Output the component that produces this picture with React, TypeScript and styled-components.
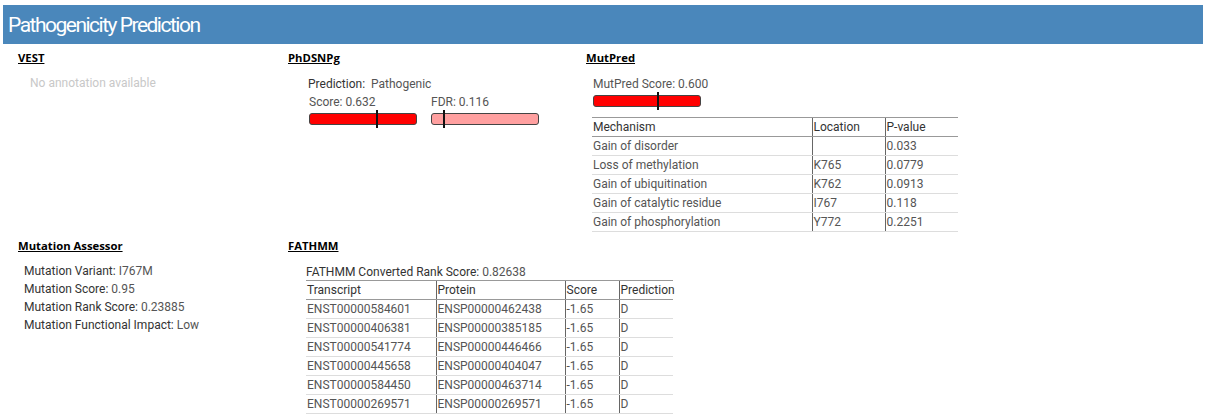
import React from "react";
import styled, { createGlobalStyle } from "styled-components";

const GlobalStyle = createGlobalStyle`
	body {
		margin: 0;
		background: #fff;
		font-family: Roboto, "Liberation Sans", sans-serif;
	}
`;

const mutPredRows = [
	["Gain of disorder", "", "0.033"],
	["Loss of methylation", "K765", "0.0779"],
	["Gain of ubiquitination", "K762", "0.0913"],
	["Gain of catalytic residue", "I767", "0.118"],
	["Gain of phosphorylation", "Y772", "0.2251"],
];

const fathmmRows = [
	["ENST00000584601", "ENSP00000462438", "-1.65", "D"],
	["ENST00000406381", "ENSP00000385185", "-1.65", "D"],
	["ENST00000541774", "ENSP00000446466", "-1.65", "D"],
	["ENST00000445658", "ENSP00000404047", "-1.65", "D"],
	["ENST00000584450", "ENSP00000463714", "-1.65", "D"],
	["ENST00000269571", "ENSP00000269571", "-1.65", "D"],
];

function ScoreBar({ value, light }: { value: number; light?: boolean }) {
	return (
		<Bar $light={light}>
			<Marker style={{ left: `${value * 100}%` }} />
		</Bar>
	);
}

export default function App() {
	return (
		<Page>
			<GlobalStyle />
			<TitleBar>
				<Title>Pathogenicity Prediction</Title>
			</TitleBar>
			<Grid>
				<Section>
					<SectionTitle>VEST</SectionTitle>
					<Content $indent={12} $top={8}>
						<Muted>No annotation available</Muted>
					</Content>
				</Section>

				<Section>
					<SectionTitle>PhDSNPg</SectionTitle>
					<Content $indent={20} $top={9}>
						<Line>
							<Label>Prediction:</Label>&nbsp; <Value>Pathogenic</Value>
						</Line>
						<BarRow>
							<BarGroup>
								<Line>
									<Value>Score: 0.632</Value>
								</Line>
								<ScoreBar value={0.632} />
							</BarGroup>
							<BarGroup>
								<Line>
									<Value>FDR: 0.116</Value>
								</Line>
								<ScoreBar value={0.116} light />
							</BarGroup>
						</BarRow>
					</Content>
				</Section>

				<Section>
					<SectionTitle>MutPred</SectionTitle>
					<Content $indent={6} $top={9}>
						<BarGroup $pad={1}>
							<Line>
								<Value>MutPred Score: 0.600</Value>
							</Line>
							<ScoreBar value={0.6} />
						</BarGroup>
						<Table $top={10} $width={366}>
							<colgroup>
								<col style={{ width: 220 }} />
								<col style={{ width: 73 }} />
								<col style={{ width: 73 }} />
							</colgroup>
							<thead>
								<tr>
									<Th>Mechanism</Th>
									<Th>Location</Th>
									<Th>P-value</Th>
								</tr>
							</thead>
							<tbody>
								{mutPredRows.map((r) => (
									<tr key={r[0]}>
										{r.map((c, i) => (
											<Td key={i}>{c}</Td>
										))}
									</tr>
								))}
							</tbody>
						</Table>
					</Content>
				</Section>

				<Section>
					<SectionTitle>Mutation Assessor</SectionTitle>
					<Content $indent={6} $top={8}>
						<Line>
							<Label>Mutation Variant:</Label> <Value>I767M</Value>
						</Line>
						<Line>
							<Label>Mutation Score:</Label> <Value>0.95</Value>
						</Line>
						<Line>
							<Label>Mutation Rank Score:</Label> <Value>0.23885</Value>
						</Line>
						<Line>
							<Label>Mutation Functional Impact:</Label> <Value>Low</Value>
						</Line>
					</Content>
				</Section>

				<Section>
					<SectionTitle>FATHMM</SectionTitle>
					<Content $indent={18} $top={10}>
						<Caption>
							<Label>FATHMM Converted Rank Score:</Label> <Value>0.82638</Value>
						</Caption>
						<Table $width={367}>
							<colgroup>
								<col style={{ width: 130 }} />
								<col style={{ width: 129 }} />
								<col style={{ width: 54 }} />
								<col style={{ width: 54 }} />
							</colgroup>
							<thead>
								<tr>
									<Th>Transcript</Th>
									<Th>Protein</Th>
									<Th>Score</Th>
									<Th>Prediction</Th>
								</tr>
							</thead>
							<tbody>
								{fathmmRows.map((r) => (
									<tr key={r[0]}>
										{r.map((c, i) => (
											<Td key={i}>{c}</Td>
										))}
									</tr>
								))}
							</tbody>
						</Table>
					</Content>
				</Section>
			</Grid>
		</Page>
	);
}

const Page = styled.div`
	padding: 5px 4px 0 3px;
`;

const TitleBar = styled.header`
	height: 39px;
	background-color: #4a87bb;
	display: flex;
	align-items: center;
	padding-left: 5px;
`;

const Title = styled.h1`
	margin: 0;
	color: #fff;
	font-family: Roboto, "Liberation Sans", sans-serif;
	font-size: 21px;
	font-weight: 400;
	letter-spacing: -1.5px;
`;

const Grid = styled.div`
	display: grid;
	grid-template-columns: 270px 298px 1fr;
	row-gap: 6px;
	padding: 6px 0 0 15px;
`;

const Section = styled.section`
	display: flex;
	flex-direction: column;
	align-items: flex-start;
`;

const SectionTitle = styled.h2`
	margin: 0;
	font-family: "Open Sans", "DejaVu Sans", sans-serif;
	font-size: 11.3px;
	font-weight: 700;
	line-height: 16px;
	color: #000;
	text-decoration: underline;
`;

const Content = styled.div<{ $indent: number; $top: number }>`
	margin: ${(p) => p.$top}px 0 0 ${(p) => p.$indent}px;
	font-size: 12px;
	color: #555;
`;

const Line = styled.div`
	line-height: 18px;
	white-space: nowrap;
`;

const Caption = styled.div`
	line-height: 16px;
	white-space: nowrap;
`;

const Label = styled.span`
	color: #333;
`;

const Value = styled.span`
	color: #555;
`;

const Muted = styled.span`
	color: #c8c8c8;
	line-height: 18px;
`;

const BarRow = styled.div`
	display: flex;
	gap: 14px;
	margin-left: 1px;
`;

const BarGroup = styled.div<{ $pad?: number }>`
	display: flex;
	flex-direction: column;
	padding-left: ${(p) => p.$pad ?? 0}px;
`;

const Bar = styled.div<{ $light?: boolean }>`
	position: relative;
	box-sizing: border-box;
	width: 108px;
	height: 12px;
	margin-top: 2px;
	border: 1px solid #444;
	border-radius: 3px;
	background-color: ${(p) => (p.$light ? "#ffa0a0" : "#ff0000")};
`;

const Marker = styled.span`
	position: absolute;
	top: -4px;
	bottom: -4px;
	width: 2px;
	margin-left: -1px;
	background-color: #111;
`;

const Table = styled.table<{ $top?: number; $width: number }>`
	width: ${(p) => p.$width}px;
	margin-top: ${(p) => p.$top ?? 0}px;
	border-collapse: collapse;
	table-layout: fixed;
	font-size: 12px;
`;

const Th = styled.th`
	height: 18px;
	padding: 0 1px;
	line-height: 18px;
	text-align: left;
	font-weight: 400;
	color: #333;
	white-space: nowrap;
	overflow: visible;
	border-top: 1px solid #999;
	border-bottom: 1px solid #999;
	& + & {
		border-left: 1px solid #666;
	}
`;

const Td = styled.td`
	height: 18px;
	padding: 0 1px;
	line-height: 18px;
	color: #555;
	white-space: nowrap;
	border-bottom: 1px solid #ddd;
	& + & {
		border-left: 1px solid #666;
	}
`;
